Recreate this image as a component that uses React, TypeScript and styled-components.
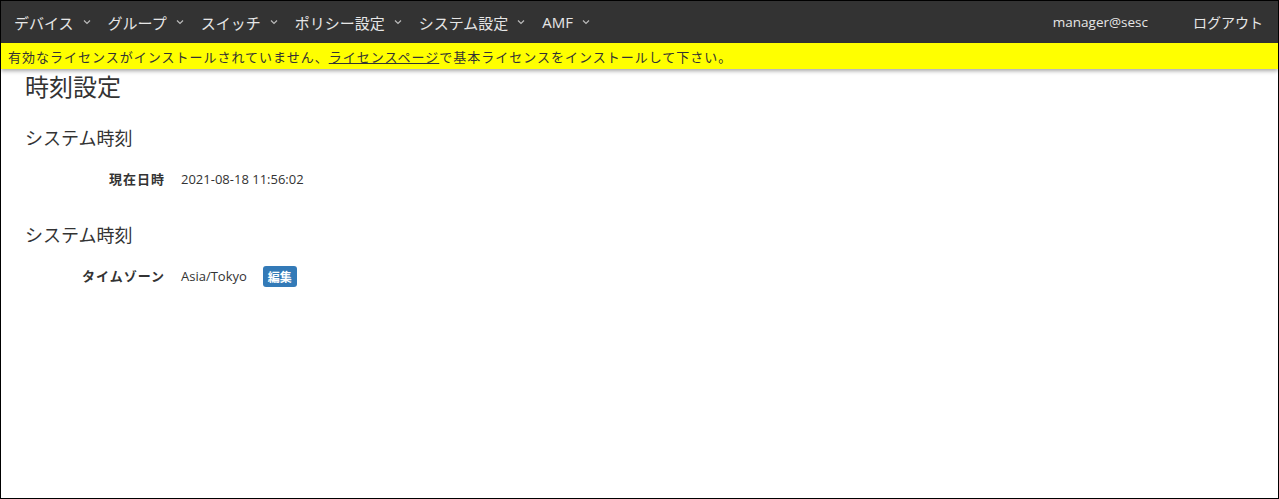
import * as React from "react"
import styled, {createGlobalStyle} from "styled-components"

const GlobalStyle = createGlobalStyle`
  html, body {
    margin: 0;
    padding: 0;
    background: #fff;
  }
  body {
    font-family: "Open Sans", "Noto Sans CJK JP", sans-serif;
    color: #333;
  }
`

const Frame = styled("div")`
  width: 1279px;
  height: 499px;
  box-sizing: border-box;
  border: 1px solid #000;
  display: flex;
  flex-direction: column;
  overflow: hidden;
`

const NavBar = styled("nav")`
  height: 42px;
  background: #333;
  display: flex;
  align-items: center;
  justify-content: space-between;
  padding: 0 15px 0 13px;
  flex-shrink: 0;
`

const NavGroup = styled("div")<{ $gap: number }>`
  display: flex;
  align-items: center;
  gap: ${p => p.$gap}px;
`

const NavItem = styled("span")`
  color: #e6e6e6;
  font-size: 15px;
  display: flex;
  align-items: center;
  gap: 9px;
  white-space: nowrap;
  font-family: "Open Sans", "Noto Sans CJK JP", sans-serif;
`

const NavPlain = styled("span")<{ $size: number }>`
  color: #e6e6e6;
  font-size: ${p => p.$size}px;
  white-space: nowrap;
  font-family: "Open Sans", "Noto Sans CJK JP", sans-serif;
`

const Notice = styled("div")`
  height: 26px;
  background: #ffff00;
  display: flex;
  align-items: center;
  padding-left: 7px;
  font-size: 13px;
  letter-spacing: 1px;
  color: #333;
  box-shadow: 0 2px 4px rgba(0, 0, 0, 0.35);
  position: relative;
  z-index: 1;
  flex-shrink: 0;
  font-family: "Noto Sans CJK JP", sans-serif;
`

const NoticeLink = styled("a")`
  color: #333;
  text-decoration: underline;
`

const Content = styled("main")`
  padding: 0 0 0 24px;
  display: flex;
  flex-direction: column;
`

const Title = styled("h1")`
  font-size: 24px;
  font-weight: 400;
  margin: 2px 0 0;
  line-height: 30px;
  font-family: "Noto Sans CJK JP", sans-serif;
`

const SectionTitle = styled("h3")`
  font-size: 18px;
  font-weight: 400;
  margin: 0;
  line-height: 24px;
  font-family: "Noto Sans CJK JP", sans-serif;
`

const Section = styled("section")<{ $top: number }>`
  margin-top: ${p => p.$top}px;
  display: flex;
  flex-direction: column;
  gap: 19px;
`

const Row = styled("div")`
  display: flex;
  align-items: center;
  font-size: 13px;
  line-height: 22px;
`

const Label = styled("span")`
  width: 140px;
  text-align: right;
  font-weight: 700;
  letter-spacing: 1px;
  padding-right: 16px;
  font-family: "Noto Sans CJK JP", sans-serif;
`

const Value = styled("span")`
  font-family: "Open Sans", "Noto Sans CJK JP", sans-serif;
`

const Badge = styled("span")`
  margin-left: 16px;
  background: #337ab7;
  color: #fff;
  font-size: 12px;
  font-weight: 700;
  border-radius: 3px;
  padding: 0 5px;
  line-height: 21px;
  font-family: "Noto Sans CJK JP", sans-serif;
`

const Chevron = () => (
  <svg width="8" height="6" viewBox="0 0 8 6">
    <path d="M1 1.5 L4 4.5 L7 1.5" fill="none" stroke="#bbb" strokeWidth="1.2" />
  </svg>
)

const menus = ["デバイス", "グループ", "スイッチ", "ポリシー設定", "システム設定", "AMF"]

export default function App() {
  return (
    <Frame>
      <GlobalStyle />
      <NavBar>
        <NavGroup $gap={17}>
          {menus.map(m => (
            <NavItem key={m}>
              {m}
              <Chevron />
            </NavItem>
          ))}
        </NavGroup>
        <NavGroup $gap={45}>
          <NavPlain $size={13.5}>manager@sesc</NavPlain>
          <NavPlain $size={14}>ログアウト</NavPlain>
        </NavGroup>
      </NavBar>
      <Notice>
        有効なライセンスがインストールされていません、<NoticeLink href="#">ライセンスページ</NoticeLink>で基本ライセンスをインストールして下さい。
      </Notice>
      <Content>
        <Title>時刻設定</Title>
        <Section $top={24}>
          <SectionTitle>システム時刻</SectionTitle>
          <Row>
            <Label>現在日時</Label>
            <Value>2021-08-18 11:56:02</Value>
          </Row>
        </Section>
        <Section $top={32}>
          <SectionTitle>システム時刻</SectionTitle>
          <Row>
            <Label>タイムゾーン</Label>
            <Value>Asia/Tokyo</Value>
            <Badge>編集</Badge>
          </Row>
        </Section>
      </Content>
    </Frame>
  )
}
